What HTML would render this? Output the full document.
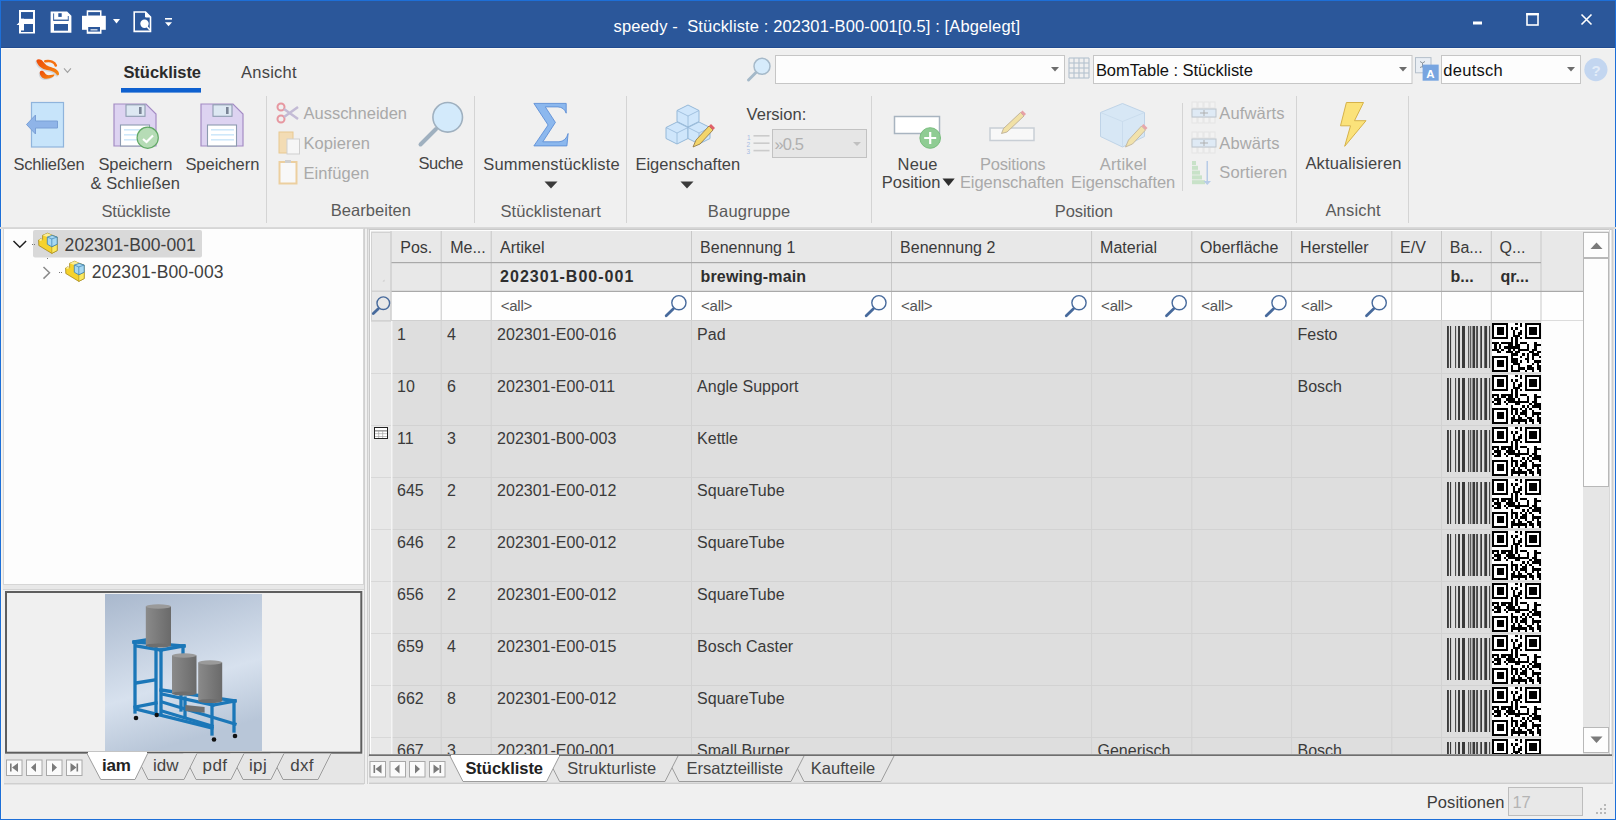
<!DOCTYPE html>
<html><head><meta charset="utf-8"><title>speedy</title>
<style>html,body{margin:0;padding:0;width:1616px;height:820px;overflow:hidden;background:#f0f0f0}
svg{display:block;font-family:"Liberation Sans",sans-serif}</style></head>
<body><svg width="1616" height="820" viewBox="0 0 1616 820">
<rect x="0" y="0" width="1616" height="820" fill="#f0f0f0"/>
<rect x="0" y="0" width="1616" height="48" fill="#2b579a"/>
<rect x="0" y="47" width="1616" height="1" fill="#224c90"/>
<rect x="1" y="48" width="1614" height="1" fill="#fbfaf6"/>
<rect x="1" y="48" width="1" height="772" fill="#f8f4ec"/>
<rect x="0" y="0" width="1616" height="1" fill="#1d6fd8"/>
<rect x="0" y="0" width="1" height="820" fill="#1d6fd8"/>
<rect x="1615" y="0" width="1" height="820" fill="#1d6fd8"/>
<rect x="0" y="819" width="1616" height="1" fill="#1d6fd8"/>
<g fill="#fff">
<path d="M19 10h16v23.5h-16v-8.5h-2.5l2.5-2.5v-1.5z"/>
</g>
<rect x="21" y="12.2" width="12" height="6.4" fill="#2b579a"/>
<rect x="24" y="18.6" width="9" height="0.1" fill="#2b579a"/>
<rect x="24" y="12.2" width="9" height="6.4" fill="#2b579a"/>
<rect x="24" y="24" width="9" height="8" fill="#2b579a"/>
<rect x="21" y="12.2" width="3" height="1.5" fill="#2b579a"/>
<rect x="21" y="30.5" width="3" height="1.5" fill="#2b579a"/>
<path d="M50.6 11.4h16.5l4.3 4.3v17h-20.8z" fill="#fff"/>
<rect x="54" y="24" width="14" height="6.7" fill="#2b579a"/>
<rect x="54" y="19.6" width="14" height="1.3" fill="#2b579a"/>
<rect x="58.3" y="13.2" width="3.4" height="3.7" fill="#2b579a"/>
<rect x="53.2" y="13.4" width="0.9" height="7.5" fill="#2b579a"/>
<rect x="67.8" y="16" width="0.9" height="5" fill="#2b579a"/>
<rect x="86.7" y="10.3" width="14.8" height="23.5" fill="#fff"/>
<rect x="82" y="15.8" width="23.8" height="14" fill="#fff"/>
<rect x="88.2" y="12.1" width="11.8" height="3.4" fill="#2b579a"/>
<rect x="88.2" y="27" width="11.8" height="4.6" fill="#2b579a"/>
<rect x="90.5" y="29.3" width="7" height="1.1" fill="#fff"/>
<path d="M113 18.9h7l-3.5 4.7z" fill="#fff"/>
<path d="M134.2 12h11.3l5 5v14.4h-16.3z" fill="none" stroke="#fff" stroke-width="1.6"/>
<path d="M145.5 12v5h5" fill="#fff" stroke="#fff" stroke-width="1"/>
<circle cx="144.5" cy="23.8" r="4.2" fill="#fff"/>
<path d="M146 25.5l4 4.5" stroke="#fff" stroke-width="1.6"/>
<rect x="165" y="18" width="7" height="1.6" fill="#fff"/>
<path d="M165 22.3h7l-3.5 4z" fill="#fff"/>
<text x="613.60" y="31.50" font-size="16.5" fill="#ffffff" textLength="406.42" lengthAdjust="spacing" xml:space="preserve">speedy -  Stückliste : 202301-B00-001[0.5] : [Abgelegt]</text>
<rect x="1473" y="21.5" width="9" height="3" fill="#fff"/>
<rect x="1527" y="14" width="11" height="11" fill="none" stroke="#fff" stroke-width="1.6"/>
<rect x="1526.2" y="13" width="12.6" height="2.4" fill="#fff"/>
<path d="M1581.5 14.5l10 10M1591.5 14.5l-10 10" stroke="#fff" stroke-width="1.6"/>
<defs><linearGradient id="lg" x1="0" y1="0" x2="1" y2="1"><stop offset="0" stop-color="#ee4a08"/><stop offset="1" stop-color="#f58a12"/></linearGradient></defs>
<g opacity="0.35" transform="translate(-1,1.2)"><path d="M36.5 61.5C36 59 39 58.5 41.5 60C44 62 45 65 49 66.5C54 68 58.5 69.5 59 73.5C59.2 75.5 57.5 76 56.5 74.5C55 71.5 51 70.8 47 70C42 69 38 66 36.5 61.5Z M39.8 72C40.5 70 43.5 70.5 44.5 72.5C45.5 74.5 47.5 75.5 50.5 75C52.5 74.5 54 74 54.5 74.8C54.5 76.5 51 78.5 46.5 78.8C42.5 79 39.5 76 39.8 72Z" fill="#9aa8b8"/></g>
<path d="M36.5 61.5C36 59 39 58.5 41.5 60C44 62 45 65 49 66.5C54 68 58.5 69.5 59 73.5C59.2 75.5 57.5 76 56.5 74.5C55 71.5 51 70.8 47 70C42 69 38 66 36.5 61.5Z" fill="url(#lg)"/>
<path d="M45.3 61.2C50 60.3 54.5 61.8 55.8 65.5" fill="none" stroke="#f57010" stroke-width="2.6" stroke-linecap="round"/>
<path d="M39.8 72C40.5 70 43.5 70.5 44.5 72.5C45.5 74.5 47.5 75.5 50.5 75C52.5 74.5 54 74 54.5 74.8C54.5 76.5 51 78.5 46.5 78.8C42.5 79 39.5 76 39.8 72Z" fill="url(#lg)"/>
<path d="M64 68.4l3.5 3.9l3.4-3.9" fill="none" stroke="#a0a0a0" stroke-width="1.1"/>
<text x="123.40" y="77.90" font-size="16.5" fill="#2b2b2b" font-weight="bold" textLength="77.65" lengthAdjust="spacing" xml:space="preserve">Stückliste</text>
<rect x="121" y="88" width="80" height="4.6" fill="#0e60cf"/>
<text x="241.00" y="77.90" font-size="16.5" fill="#444444" textLength="55.61" lengthAdjust="spacing" xml:space="preserve">Ansicht</text>
<circle cx="762" cy="66.3" r="8" fill="#d6ebfb" stroke="#a5b9c9" stroke-width="1.5"/>
<path d="M756 72.5l-7.5 7.5" stroke="#a5b9c9" stroke-width="3" stroke-linecap="round"/>
<rect x="775.5" y="55.5" width="289" height="28" fill="#fdfdfd" stroke="#c6c6c6" stroke-width="1"/>
<path d="M1051 67h8l-4 4.5z" fill="#6d6d6d"/>
<g stroke="#b8c4d0" stroke-width="1.2" fill="none">
<line x1="1069" y1="58" x2="1069" y2="78"/>
<line x1="1069" y1="58" x2="1089" y2="58"/>
<line x1="1074" y1="58" x2="1074" y2="78"/>
<line x1="1069" y1="63" x2="1089" y2="63"/>
<line x1="1079" y1="58" x2="1079" y2="78"/>
<line x1="1069" y1="68" x2="1089" y2="68"/>
<line x1="1084" y1="58" x2="1084" y2="78"/>
<line x1="1069" y1="73" x2="1089" y2="73"/>
<line x1="1089" y1="58" x2="1089" y2="78"/>
<line x1="1069" y1="78" x2="1089" y2="78"/>
</g>
<rect x="1093.5" y="55.5" width="318.5" height="28" fill="#fdfdfd" stroke="#c6c6c6" stroke-width="1"/>
<text x="1095.90" y="75.70" font-size="16.5" fill="#111" textLength="156.93" lengthAdjust="spacing" xml:space="preserve">BomTable : Stückliste</text>
<path d="M1399 67h8l-4 4.5z" fill="#6d6d6d"/>
<rect x="1415.5" y="57.6" width="15.5" height="15.2" fill="#e9eef4" stroke="#b4bfca" stroke-width="1"/>
<path d="M1420 61.5l2.5 1.5l2.5-1.5M1422.5 63v4.5M1420 67.5l5-2" stroke="#8a949e" stroke-width="1" fill="none"/>
<rect x="1422.6" y="64.6" width="16.1" height="16.1" fill="#78a5e0"/>
<text x="1426.3" y="78.3" font-size="11.5" font-weight="bold" fill="#ffffff">A</text>
<rect x="1441.5" y="55.5" width="139" height="28" fill="#fdfdfd" stroke="#c6c6c6" stroke-width="1"/>
<text x="1443.20" y="75.70" font-size="16.5" fill="#111" textLength="59.59" lengthAdjust="spacing" xml:space="preserve">deutsch</text>
<path d="M1567 67h8l-4 4.5z" fill="#6d6d6d"/>
<circle cx="1595.9" cy="69.6" r="11.6" fill="#c3d6f0"/>
<text x="1591.6" y="75.8" font-size="15" font-weight="bold" fill="#e2ecf8">?</text>
<rect x="266.0" y="96" width="1" height="127" fill="#d4d4d4"/>
<rect x="474.0" y="96" width="1" height="127" fill="#d4d4d4"/>
<rect x="626.0" y="96" width="1" height="127" fill="#d4d4d4"/>
<rect x="871.0" y="96" width="1" height="127" fill="#d4d4d4"/>
<rect x="1296.0" y="96" width="1" height="127" fill="#d4d4d4"/>
<rect x="1408.0" y="96" width="1" height="127" fill="#d4d4d4"/>
<rect x="1182" y="103" width="1" height="88" fill="#d4d4d4"/>
<rect x="0" y="227" width="1616" height="2" fill="#d9d9d9"/>
<rect x="31.5" y="102.5" width="32" height="44.5" fill="#c7e4fa" stroke="#8fb4dc" stroke-width="1.2"/>
<path d="M26.5 124.5l9-9.5v6h22v7h-22v6z" fill="#8fb4e8" stroke="#7aa0d6" stroke-width="1"/>
<text x="13.50" y="170.00" font-size="16.5" fill="#444444" textLength="71.07" lengthAdjust="spacing" xml:space="preserve">Schließen</text>
<path d="M114 104h32l10 10v32h-42z" fill="#ddd3f1" stroke="#a48cc4" stroke-width="1.2"/>
<rect x="126" y="104.8" width="19" height="11.5" fill="#dde8f2" stroke="#8d9bb0" stroke-width="1.1"/>
<rect x="139" y="107" width="2.6" height="7" fill="#7a8496"/>
<rect x="120.5" y="125" width="29" height="21" fill="#ffffff" stroke="#8d9bb0" stroke-width="1.1"/>
<rect x="124" y="129" width="23" height="1.6" fill="#cfe8fa"/>
<rect x="124" y="134" width="23" height="1.6" fill="#cfe8fa"/>
<rect x="124" y="139" width="23" height="1.6" fill="#cfe8fa"/>
<circle cx="147.7" cy="137.7" r="10.6" fill="#b6dcb6" stroke="#62a966" stroke-width="1.2"/>
<path d="M143 139l3.5 3l6.5-6.5" fill="none" stroke="#fff" stroke-width="2.2"/>
<text x="98.40" y="170.00" font-size="16.5" fill="#444444" textLength="74.00" lengthAdjust="spacing" xml:space="preserve">Speichern</text>
<text x="90.50" y="188.80" font-size="16.5" fill="#444444" textLength="89.46" lengthAdjust="spacing" xml:space="preserve">&amp; Schließen</text>
<path d="M201 104h32l10 10v32h-42z" fill="#ddd3f1" stroke="#a48cc4" stroke-width="1.2"/>
<rect x="213" y="104.8" width="19" height="11.5" fill="#dde8f2" stroke="#8d9bb0" stroke-width="1.1"/>
<rect x="226" y="107" width="2.6" height="7" fill="#7a8496"/>
<rect x="207.5" y="125" width="29" height="21" fill="#ffffff" stroke="#8d9bb0" stroke-width="1.1"/>
<rect x="211" y="129" width="23" height="1.6" fill="#cfe8fa"/>
<rect x="211" y="134" width="23" height="1.6" fill="#cfe8fa"/>
<rect x="211" y="139" width="23" height="1.6" fill="#cfe8fa"/>
<text x="185.40" y="170.00" font-size="16.5" fill="#444444" textLength="74.00" lengthAdjust="spacing" xml:space="preserve">Speichern</text>
<text x="101.40" y="216.50" font-size="16.5" fill="#5a5a5a" textLength="69.31" lengthAdjust="spacing" xml:space="preserve">Stückliste</text>
<g opacity="0.55"><circle cx="281" cy="107" r="3.5" fill="none" stroke="#e05060" stroke-width="2"/><circle cx="281" cy="119" r="3.5" fill="none" stroke="#e05060" stroke-width="2"/><path d="M284 109l14 10M284 117l14-10" stroke="#a090c0" stroke-width="2.5"/></g>
<text x="303.50" y="119.00" font-size="16.5" fill="#a9a9a9" textLength="103.56" lengthAdjust="spacing" xml:space="preserve">Ausschneiden</text>
<rect x="279" y="132" width="14" height="21" fill="#f3dcb4" stroke="#e8c890" stroke-width="1"/>
<rect x="287" y="139" width="12.5" height="15" fill="#f6f6f6" stroke="#cfcfcf" stroke-width="1"/>
<text x="303.50" y="148.90" font-size="16.5" fill="#a9a9a9" textLength="66.55" lengthAdjust="spacing" xml:space="preserve">Kopieren</text>
<rect x="279.5" y="162" width="17" height="21.5" fill="#f8f8f8" stroke="#eccf9f" stroke-width="2"/>
<rect x="285" y="160" width="6" height="3" fill="#d0d0d0"/>
<text x="303.50" y="178.75" font-size="16.5" fill="#a9a9a9" textLength="65.74" lengthAdjust="spacing" xml:space="preserve">Einfügen</text>
<circle cx="447.7" cy="117.3" r="14.8" fill="#d3eafb" stroke="#9fb0bf" stroke-width="1.6"/>
<path d="M436 129l-15.5 15.5" stroke="#9fb0bf" stroke-width="4" stroke-linecap="round"/>
<text x="418.40" y="169.40" font-size="16.5" fill="#444444" textLength="44.98" lengthAdjust="spacing" xml:space="preserve">Suche</text>
<text x="330.80" y="216.30" font-size="16.5" fill="#5a5a5a" textLength="80.21" lengthAdjust="spacing" xml:space="preserve">Bearbeiten</text>
<path d="M533.9 103.4L566.2 103.4L566.2 113.2Q564 107.2 558 106.9L545.3 106.9L555.4 122.4L542.8 141.8L559 141.8Q566 141.2 568.1 133.5L566.9 145.9L533.9 145.9L548.1 125Z" fill="#8cb8ee" stroke="#5d8fd6" stroke-width="0.9" stroke-linejoin="round"/>
<text x="483.20" y="170.00" font-size="16.5" fill="#444444" textLength="136.48" lengthAdjust="spacing" xml:space="preserve">Summenstückliste</text>
<path d="M544.5 181.5h13l-6.5 7z" fill="#3a3a3a"/>
<text x="500.40" y="216.90" font-size="16.5" fill="#5a5a5a" textLength="100.34" lengthAdjust="spacing" xml:space="preserve">Stücklistenart</text>
<path d="M688 105l11 5.5v11l-11 5.5l-11 -5.5v-11z" fill="#cfe6fb" stroke="#95b8d8" stroke-width="1"/>
<path d="M677 110.5l11 5.5l11 -5.5M688 116v11" fill="none" stroke="#95b8d8" stroke-width="0.8"/>
<path d="M677 122l11 5.5v11l-11 5.5l-11 -5.5v-11z" fill="#cfe6fb" stroke="#95b8d8" stroke-width="1"/>
<path d="M666 127.5l11 5.5l11 -5.5M677 133v11" fill="none" stroke="#95b8d8" stroke-width="0.8"/>
<path d="M699 122l11 5.5v11l-11 5.5l-11 -5.5v-11z" fill="#cfe6fb" stroke="#95b8d8" stroke-width="1"/>
<path d="M688 127.5l11 5.5l11 -5.5M699 133v11" fill="none" stroke="#95b8d8" stroke-width="0.8"/>
<path d="M693 147l3-7l13-14l4 4l-13 14z" fill="#f3d56a" stroke="#8a7040" stroke-width="0.8"/>
<path d="M709 126l2-2l4 4l-2 2z" fill="#e0606a"/>
<text x="635.40" y="170.00" font-size="16.5" fill="#444444" textLength="104.78" lengthAdjust="spacing" xml:space="preserve">Eigenschaften</text>
<path d="M680.5 181.5h13l-6.5 7z" fill="#3a3a3a"/>
<text x="746.60" y="120.00" font-size="16.5" fill="#444444" textLength="59.62" lengthAdjust="spacing" xml:space="preserve">Version:</text>
<g opacity="0.5"><text x="747" y="139.5" font-size="6.5" fill="#5a8ad8">1</text><text x="746.5" y="147" font-size="6.5" fill="#5a8ad8">2</text><text x="746.5" y="154" font-size="6.5" fill="#5a8ad8">3</text>
<rect x="753.5" y="135.0" width="16" height="1.6" fill="#a8a8a8"/>
<rect x="753.5" y="142.4" width="16" height="1.6" fill="#a8a8a8"/>
<rect x="753.5" y="149.8" width="16" height="1.6" fill="#a8a8a8"/>
</g>
<rect x="772.5" y="129.5" width="94" height="28" fill="#e6e6e6" stroke="#c2c2c2" stroke-width="1"/>
<text x="774.50" y="149.60" font-size="16.5" fill="#b0b0b0" textLength="29.51" lengthAdjust="spacing" xml:space="preserve">»0.5</text>
<path d="M853 142h8l-4 4z" fill="#c0c0c0"/>
<text x="707.80" y="216.90" font-size="16.5" fill="#5a5a5a" textLength="82.44" lengthAdjust="spacing" xml:space="preserve">Baugruppe</text>
<rect x="894.5" y="116.5" width="45" height="17" fill="#ffffff" stroke="#a8b4c0" stroke-width="1.5"/>
<circle cx="930.2" cy="138" r="10.3" fill="#8fcc93" stroke="#78bd7d" stroke-width="1"/>
<path d="M930.2 132v12M924.2 138h12" stroke="#fff" stroke-width="2.2"/>
<text x="897.60" y="169.60" font-size="16.5" fill="#444444" textLength="39.85" lengthAdjust="spacing" xml:space="preserve">Neue</text>
<text x="881.80" y="188.40" font-size="16.5" fill="#444444" textLength="58.60" lengthAdjust="spacing" xml:space="preserve">Position</text>
<path d="M942.5 178.5h12.2l-6.1 7.5z" fill="#2e2e2e"/>
<g opacity="0.55">
<rect x="990" y="128" width="44" height="12.5" fill="#ffffff" stroke="#a8b4c0" stroke-width="1.5"/>
<path d="M1001.5 133.5l2-5l17-16l3.5 3.5l-17 16z" fill="#f3d56a" stroke="#8a7040" stroke-width="0.8"/>
<path d="M1020.5 112.5l2-2l3.5 3.5l-2 2z" fill="#e0606a"/>
</g>
<text x="979.90" y="169.60" font-size="16.5" fill="#a9a9a9" textLength="65.65" lengthAdjust="spacing" xml:space="preserve">Positions</text>
<text x="959.90" y="188.40" font-size="16.5" fill="#a9a9a9" textLength="104.08" lengthAdjust="spacing" xml:space="preserve">Eigenschaften</text>
<g opacity="0.5">
<path d="M1122.5 103.5l22 9v24l-22 10.5l-22-10.5v-24z" fill="#bfe0fa" stroke="#8fb8e0" stroke-width="1"/>
<path d="M1100.5 112.5l22 9l22-9M1122.5 121.5v25.5" fill="none" stroke="#9fc4e8" stroke-width="0.8"/>
<path d="M1125.5 147l3-7l13-14l4 4l-13 14z" fill="#f3d56a" stroke="#8a7040" stroke-width="0.8"/>
<path d="M1141.5 126l2-2l4 4l-2 2z" fill="#e0606a"/>
</g>
<text x="1099.70" y="169.60" font-size="16.5" fill="#a9a9a9" textLength="47.04" lengthAdjust="spacing" xml:space="preserve">Artikel</text>
<text x="1071.10" y="188.40" font-size="16.5" fill="#a9a9a9" textLength="104.18" lengthAdjust="spacing" xml:space="preserve">Eigenschaften</text>
<g opacity="0.5">
<rect x="1192" y="102.0" width="5" height="6" fill="#f4f4f4" stroke="#d8d8d8" stroke-width="0.8"/>
<rect x="1198" y="102.0" width="5" height="6" fill="#f4f4f4" stroke="#d8d8d8" stroke-width="0.8"/>
<rect x="1204" y="102.0" width="5" height="6" fill="#f4f4f4" stroke="#d8d8d8" stroke-width="0.8"/>
<rect x="1210" y="102.0" width="5" height="6" fill="#f4f4f4" stroke="#d8d8d8" stroke-width="0.8"/>
<rect x="1192" y="109.5" width="5" height="6" fill="#f4f4f4" stroke="#d8d8d8" stroke-width="0.8"/>
<rect x="1198" y="109.5" width="5" height="6" fill="#f4f4f4" stroke="#d8d8d8" stroke-width="0.8"/>
<rect x="1204" y="109.5" width="5" height="6" fill="#f4f4f4" stroke="#d8d8d8" stroke-width="0.8"/>
<rect x="1210" y="109.5" width="5" height="6" fill="#f4f4f4" stroke="#d8d8d8" stroke-width="0.8"/>
<rect x="1192" y="117.0" width="5" height="6" fill="#f4f4f4" stroke="#d8d8d8" stroke-width="0.8"/>
<rect x="1198" y="117.0" width="5" height="6" fill="#f4f4f4" stroke="#d8d8d8" stroke-width="0.8"/>
<rect x="1204" y="117.0" width="5" height="6" fill="#f4f4f4" stroke="#d8d8d8" stroke-width="0.8"/>
<rect x="1210" y="117.0" width="5" height="6" fill="#f4f4f4" stroke="#d8d8d8" stroke-width="0.8"/>
<rect x="1192" y="109" width="24" height="8" fill="#cfe6fb" stroke="#8a9aaa" stroke-width="1"/>
<path d="M1200 113h8M1204 110v6" stroke="#707070" stroke-width="1"/>
</g>
<g opacity="0.5">
<rect x="1192" y="132.0" width="5" height="6" fill="#f4f4f4" stroke="#d8d8d8" stroke-width="0.8"/>
<rect x="1198" y="132.0" width="5" height="6" fill="#f4f4f4" stroke="#d8d8d8" stroke-width="0.8"/>
<rect x="1204" y="132.0" width="5" height="6" fill="#f4f4f4" stroke="#d8d8d8" stroke-width="0.8"/>
<rect x="1210" y="132.0" width="5" height="6" fill="#f4f4f4" stroke="#d8d8d8" stroke-width="0.8"/>
<rect x="1192" y="139.5" width="5" height="6" fill="#f4f4f4" stroke="#d8d8d8" stroke-width="0.8"/>
<rect x="1198" y="139.5" width="5" height="6" fill="#f4f4f4" stroke="#d8d8d8" stroke-width="0.8"/>
<rect x="1204" y="139.5" width="5" height="6" fill="#f4f4f4" stroke="#d8d8d8" stroke-width="0.8"/>
<rect x="1210" y="139.5" width="5" height="6" fill="#f4f4f4" stroke="#d8d8d8" stroke-width="0.8"/>
<rect x="1192" y="147.0" width="5" height="6" fill="#f4f4f4" stroke="#d8d8d8" stroke-width="0.8"/>
<rect x="1198" y="147.0" width="5" height="6" fill="#f4f4f4" stroke="#d8d8d8" stroke-width="0.8"/>
<rect x="1204" y="147.0" width="5" height="6" fill="#f4f4f4" stroke="#d8d8d8" stroke-width="0.8"/>
<rect x="1210" y="147.0" width="5" height="6" fill="#f4f4f4" stroke="#d8d8d8" stroke-width="0.8"/>
<rect x="1192" y="139" width="24" height="8" fill="#cfe6fb" stroke="#8a9aaa" stroke-width="1"/>
<path d="M1200 143h8M1204 140v6" stroke="#707070" stroke-width="1"/>
</g>
<text x="1219.30" y="118.70" font-size="16.5" fill="#a9a9a9" textLength="65.19" lengthAdjust="spacing" xml:space="preserve">Aufwärts</text>
<text x="1219.30" y="148.60" font-size="16.5" fill="#a9a9a9" textLength="60.20" lengthAdjust="spacing" xml:space="preserve">Abwärts</text>
<g opacity="0.55">
<rect x="1192" y="161.0" width="4" height="4" fill="#a8d8a8"/>
<rect x="1192" y="165.8" width="6" height="4" fill="#a8d8a8"/>
<rect x="1192" y="170.6" width="8" height="4" fill="#a8d8a8"/>
<rect x="1192" y="175.4" width="10" height="4" fill="#a8d8a8"/>
<rect x="1192" y="180.2" width="13" height="4" fill="#a8d8a8"/>
<rect x="1206.5" y="161" width="1.5" height="22" fill="#8aaee0"/>
<path d="M1203.5 181h7.5l-3.75 4z" fill="#8aaee0"/>
</g>
<text x="1219.30" y="178.40" font-size="16.5" fill="#a9a9a9" textLength="67.85" lengthAdjust="spacing" xml:space="preserve">Sortieren</text>
<text x="1054.80" y="216.60" font-size="16.5" fill="#5a5a5a" textLength="58.20" lengthAdjust="spacing" xml:space="preserve">Position</text>
<path d="M1346.4 102.5L1363.5 102.5L1354.5 120.7L1366 120.7L1344.7 146.3L1350.5 125.8L1340.5 125.8Z" fill="#fbe27a" stroke="#d6b24a" stroke-width="1"/>
<text x="1305.50" y="169.40" font-size="16.5" fill="#444444" textLength="95.86" lengthAdjust="spacing" xml:space="preserve">Aktualisieren</text>
<text x="1325.40" y="216.30" font-size="16.5" fill="#5a5a5a" textLength="55.21" lengthAdjust="spacing" xml:space="preserve">Ansicht</text>
<rect x="3" y="228" width="361" height="357" fill="#d6d6d6"/>
<rect x="4" y="229" width="359" height="355" fill="#fdfdfd"/>
<rect x="33" y="230" width="169" height="27.5" rx="2" fill="#d9d9d9"/>
<path d="M13.5 241l6.3 6.3l6.3-6.3" fill="none" stroke="#1e1e1e" stroke-width="1.5"/>
<path d="M43.5 267l6 5.8l-6 5.8" fill="none" stroke="#8a8a8a" stroke-width="1.5"/>
<rect x="32" y="244" width="1" height="1" fill="#777"/>
<rect x="34" y="244" width="1" height="1" fill="#777"/>
<rect x="47" y="258" width="1" height="1" fill="#777"/>
<rect x="59" y="272" width="1" height="1" fill="#777"/>
<rect x="61" y="272" width="1" height="1" fill="#777"/>
<g transform="translate(36.3,231)">
<path d="M2.3 9L4.5 7.8L6.3 8.8V4.3L11.4 2.2L15.8 4.2L20.9 6.1V19.6L15.5 22.4L2.5 14.5Z" fill="#f6d22c" stroke="#9a7c10" stroke-width="0.7"/>
<path d="M6.3 4.3L11.4 2.2L15.8 4.2L11 6.1Z" fill="#fbee98"/>
<path d="M2.3 9L4.5 7.8L6.3 8.8L4.2 10Z" fill="#fbee98"/>
<path d="M15.5 15.8L20.9 13.2V19.6L15.5 22.4Z" fill="#fbe960" stroke="#9a7c10" stroke-width="0.5"/>
<path d="M11 6.1L15.8 4.4L20.9 6.1V13.2L15.5 15.8L11 13.2Z" fill="#a6d8f2" stroke="#3b80b2" stroke-width="0.8"/>
<path d="M11 6.1L15.5 7.9L20.9 6.1M15.5 7.9V15.8" fill="none" stroke="#3b80b2" stroke-width="0.7"/>
</g>
<g transform="translate(63.3,259)">
<path d="M2.3 9L4.5 7.8L6.3 8.8V4.3L11.4 2.2L15.8 4.2L20.9 6.1V19.6L15.5 22.4L2.5 14.5Z" fill="#f6d22c" stroke="#9a7c10" stroke-width="0.7"/>
<path d="M6.3 4.3L11.4 2.2L15.8 4.2L11 6.1Z" fill="#fbee98"/>
<path d="M2.3 9L4.5 7.8L6.3 8.8L4.2 10Z" fill="#fbee98"/>
<path d="M15.5 15.8L20.9 13.2V19.6L15.5 22.4Z" fill="#fbe960" stroke="#9a7c10" stroke-width="0.5"/>
<path d="M11 6.1L15.8 4.4L20.9 6.1V13.2L15.5 15.8L11 13.2Z" fill="#a6d8f2" stroke="#3b80b2" stroke-width="0.8"/>
<path d="M11 6.1L15.5 7.9L20.9 6.1M15.5 7.9V15.8" fill="none" stroke="#3b80b2" stroke-width="0.7"/>
</g>
<text x="64.60" y="250.50" font-size="17.5" fill="#404040" textLength="131.19" lengthAdjust="spacing" xml:space="preserve">202301-B00-001</text>
<text x="91.80" y="277.70" font-size="17.5" fill="#404040" textLength="131.69" lengthAdjust="spacing" xml:space="preserve">202301-B00-003</text>
<rect x="3" y="585" width="361" height="5" fill="#e8e8e8"/>
<rect x="3" y="589" width="361" height="1" fill="#d4d4d4"/>
<rect x="6" y="592" width="355.3" height="160.7" fill="#f0f0f0" stroke="#5e5e5e" stroke-width="2"/>
<defs><linearGradient id="bg" x1="0" y1="0" x2="0.3" y2="1">
<stop offset="0" stop-color="#a9b8cd"/><stop offset="0.65" stop-color="#d7e1ee"/><stop offset="1" stop-color="#b8c6d8"/></linearGradient>
<linearGradient id="cyl" x1="0" y1="0" x2="1" y2="0"><stop offset="0" stop-color="#8a8a8a"/><stop offset="0.5" stop-color="#7a7a7a"/><stop offset="1" stop-color="#6a6a6a"/></linearGradient></defs>
<g transform="translate(105,594)">
<rect x="0" y="0" width="157" height="157" fill="url(#bg)"/>
<line x1="29" y1="48" x2="79" y2="52" stroke="#1b77b8" stroke-width="3.3" stroke-linecap="square"/>
<line x1="31" y1="52" x2="56" y2="56" stroke="#1b77b8" stroke-width="3.3" stroke-linecap="square"/>
<line x1="56" y1="56" x2="79" y2="52" stroke="#1b77b8" stroke-width="3.3" stroke-linecap="square"/>
<line x1="29" y1="48" x2="41" y2="46" stroke="#1b77b8" stroke-width="3.3" stroke-linecap="square"/>
<line x1="30" y1="49" x2="30" y2="118" stroke="#1b77b8" stroke-width="3.3" stroke-linecap="square"/>
<line x1="51" y1="54" x2="51" y2="118" stroke="#1b77b8" stroke-width="3.3" stroke-linecap="square"/>
<line x1="56" y1="56" x2="56" y2="119" stroke="#1b77b8" stroke-width="3.3" stroke-linecap="square"/>
<line x1="78" y1="52" x2="78" y2="60" stroke="#1b77b8" stroke-width="3.3" stroke-linecap="square"/>
<line x1="31" y1="89" x2="50" y2="86" stroke="#1b77b8" stroke-width="3.3" stroke-linecap="square"/>
<line x1="30" y1="113" x2="51" y2="109" stroke="#1b77b8" stroke-width="3.3" stroke-linecap="square"/>
<line x1="56" y1="96" x2="130" y2="107" stroke="#1b77b8" stroke-width="3.3" stroke-linecap="square"/>
<line x1="57" y1="100" x2="108" y2="111" stroke="#1b77b8" stroke-width="3.3" stroke-linecap="square"/>
<line x1="108" y1="111" x2="130" y2="107" stroke="#1b77b8" stroke-width="3.3" stroke-linecap="square"/>
<line x1="80" y1="104" x2="80" y2="122" stroke="#1b77b8" stroke-width="3.3" stroke-linecap="square"/>
<line x1="107" y1="111" x2="107" y2="140" stroke="#1b77b8" stroke-width="3.3" stroke-linecap="square"/>
<line x1="129" y1="107" x2="129" y2="137" stroke="#1b77b8" stroke-width="3.3" stroke-linecap="square"/>
<line x1="76" y1="102" x2="76" y2="116" stroke="#1b77b8" stroke-width="3.3" stroke-linecap="square"/>
<line x1="31" y1="115" x2="107" y2="134" stroke="#1b77b8" stroke-width="3.3" stroke-linecap="square"/>
<line x1="57" y1="108" x2="130" y2="130" stroke="#1b77b8" stroke-width="3.3" stroke-linecap="square"/>
<line x1="57" y1="117" x2="107" y2="132" stroke="#1b77b8" stroke-width="3.3" stroke-linecap="square"/>
<g fill="#111"><circle cx="31" cy="124" r="2.3"/><circle cx="51.7" cy="121" r="2.2"/><circle cx="109" cy="145.5" r="2.3"/><circle cx="130" cy="142" r="2.3"/></g>
<rect x="40.8" y="12.5" width="25.2" height="39" fill="url(#cyl)"/>
<ellipse cx="53.4" cy="12.5" rx="12.6" ry="2.2" fill="#9a9a9a"/>
<ellipse cx="53.4" cy="51.5" rx="12.6" ry="2" fill="#6e6e6e"/>
<rect x="67" y="61.5" width="24.5" height="38" fill="url(#cyl)"/>
<ellipse cx="79.25" cy="61.5" rx="12.25" ry="2.2" fill="#9a9a9a"/>
<ellipse cx="79.25" cy="99.5" rx="12.25" ry="2" fill="#6e6e6e"/>
<rect x="93.2" y="68.5" width="24" height="38.5" fill="url(#cyl)"/>
<ellipse cx="105.2" cy="68.5" rx="12.0" ry="2.2" fill="#9a9a9a"/>
<ellipse cx="105.2" cy="107.0" rx="12.0" ry="2" fill="#6e6e6e"/>
<path d="M80.4 111L99.6 113L99.6 118.7L80.4 117Z" fill="#707070"/>
</g>
<rect x="4" y="754" width="360" height="30" fill="#e6e6e6"/>
<rect x="4" y="783" width="360" height="1.5" fill="#cfcfcf"/>
<rect x="6.5" y="760.0" width="15.5" height="15.5" fill="#fafafa" stroke="#a8a8a8" stroke-width="1"/>
<rect x="10" y="763.5" width="1.6" height="8" fill="#7a7a7a"/>
<path d="M18 763.0v9l-6-4.5z" fill="#7a7a7a"/>
<rect x="26.5" y="760.0" width="15.5" height="15.5" fill="#fafafa" stroke="#a8a8a8" stroke-width="1"/>
<path d="M36 763.0v9l-5-4.5z" fill="#7a7a7a"/>
<rect x="46.5" y="760.0" width="15.5" height="15.5" fill="#fafafa" stroke="#a8a8a8" stroke-width="1"/>
<path d="M52 763.0v9l5-4.5z" fill="#7a7a7a"/>
<rect x="66.5" y="760.0" width="15.5" height="15.5" fill="#fafafa" stroke="#a8a8a8" stroke-width="1"/>
<rect x="76.5" y="763.5" width="1.6" height="8" fill="#7a7a7a"/>
<path d="M70.5 763.0v9l6-4.5z" fill="#7a7a7a"/>
<path d="M270 753.5L283 779.5L318 779.5L331 753.5" fill="#e6e6e6" stroke="#9c9c9c" stroke-width="1"/>
<text x="290.30" y="771.30" font-size="17" fill="#444" textLength="23.18" lengthAdjust="spacing" xml:space="preserve">dxf</text>
<path d="M230 753.5L243 779.5L271 779.5L284 753.5" fill="#e6e6e6" stroke="#9c9c9c" stroke-width="1"/>
<text x="249.00" y="771.30" font-size="17" fill="#444" textLength="17.71" lengthAdjust="spacing" xml:space="preserve">ipj</text>
<path d="M183 753.5L196 779.5L231 779.5L244 753.5" fill="#e6e6e6" stroke="#9c9c9c" stroke-width="1"/>
<text x="202.60" y="771.30" font-size="17" fill="#444" textLength="24.43" lengthAdjust="spacing" xml:space="preserve">pdf</text>
<path d="M135 753.5L148 779.5L184 779.5L197 753.5" fill="#e6e6e6" stroke="#9c9c9c" stroke-width="1"/>
<text x="152.90" y="771.30" font-size="17" fill="#444" textLength="25.61" lengthAdjust="spacing" xml:space="preserve">idw</text>
<path d="M87 753.5L100.7 779.5L135 779.5L147.7 753.5" fill="#ffffff" stroke="#9c9c9c" stroke-width="1"/>
<rect x="88" y="752" width="59" height="2" fill="#ffffff"/>
<text x="101.90" y="771.30" font-size="17" fill="#222" font-weight="bold" textLength="29.09" lengthAdjust="spacing" xml:space="preserve">iam</text>
<rect x="364" y="228" width="1" height="556" fill="#d0d0d0"/>
<rect x="367" y="228" width="1" height="556" fill="#d0d0d0"/>
<rect x="368" y="229" width="1245" height="555" fill="#f0f0f0"/>
<rect x="368" y="229" width="1245" height="527" fill="#fdfdfd" stroke="#cfcfcf" stroke-width="1"/>
<rect x="371" y="231" width="1212" height="60.5" fill="#e8e8e8"/>
<rect x="391" y="291.5" width="1192" height="29" fill="#fefefe"/>
<rect x="371" y="291.5" width="20" height="29" fill="#e8e8e8"/>
<rect x="371" y="231" width="20" height="523" fill="#e8e8e8"/>
<clipPath id="gclip"><rect x="371" y="320.5" width="1212" height="433.5"/></clipPath>
<g clip-path="url(#gclip)">
<rect x="392" y="320.5" width="1149" height="434" fill="#dedede"/>
<rect x="371" y="321" width="20" height="1" fill="#d8d8d8"/>
<rect x="391" y="373" width="1150" height="1" fill="#d2d2d2"/>
<text x="397.00" y="340.00" font-size="16" fill="#3a3a3a" xml:space="preserve">1</text>
<text x="447.00" y="340.00" font-size="16" fill="#3a3a3a" xml:space="preserve">4</text>
<text x="497.10" y="340.00" font-size="16" fill="#3a3a3a" xml:space="preserve">202301-E00-016</text>
<text x="697.10" y="340.00" font-size="16" fill="#3a3a3a" xml:space="preserve">Pad</text>
<text x="1297.50" y="340.00" font-size="16" fill="#3a3a3a" xml:space="preserve">Festo</text>
<rect x="371" y="373" width="20" height="1" fill="#d8d8d8"/>
<rect x="391" y="425" width="1150" height="1" fill="#d2d2d2"/>
<text x="397.00" y="392.00" font-size="16" fill="#3a3a3a" xml:space="preserve">10</text>
<text x="447.00" y="392.00" font-size="16" fill="#3a3a3a" xml:space="preserve">6</text>
<text x="497.10" y="392.00" font-size="16" fill="#3a3a3a" xml:space="preserve">202301-E00-011</text>
<text x="697.10" y="392.00" font-size="16" fill="#3a3a3a" xml:space="preserve">Angle Support</text>
<text x="1297.50" y="392.00" font-size="16" fill="#3a3a3a" xml:space="preserve">Bosch</text>
<rect x="371" y="425" width="20" height="1" fill="#d8d8d8"/>
<rect x="391" y="477" width="1150" height="1" fill="#d2d2d2"/>
<text x="397.00" y="444.00" font-size="16" fill="#3a3a3a" xml:space="preserve">11</text>
<text x="447.00" y="444.00" font-size="16" fill="#3a3a3a" xml:space="preserve">3</text>
<text x="497.10" y="444.00" font-size="16" fill="#3a3a3a" xml:space="preserve">202301-B00-003</text>
<text x="697.10" y="444.00" font-size="16" fill="#3a3a3a" xml:space="preserve">Kettle</text>
<rect x="371" y="477" width="20" height="1" fill="#d8d8d8"/>
<rect x="391" y="529" width="1150" height="1" fill="#d2d2d2"/>
<text x="397.00" y="496.00" font-size="16" fill="#3a3a3a" xml:space="preserve">645</text>
<text x="447.00" y="496.00" font-size="16" fill="#3a3a3a" xml:space="preserve">2</text>
<text x="497.10" y="496.00" font-size="16" fill="#3a3a3a" xml:space="preserve">202301-E00-012</text>
<text x="697.10" y="496.00" font-size="16" fill="#3a3a3a" xml:space="preserve">SquareTube</text>
<rect x="371" y="529" width="20" height="1" fill="#d8d8d8"/>
<rect x="391" y="581" width="1150" height="1" fill="#d2d2d2"/>
<text x="397.00" y="548.00" font-size="16" fill="#3a3a3a" xml:space="preserve">646</text>
<text x="447.00" y="548.00" font-size="16" fill="#3a3a3a" xml:space="preserve">2</text>
<text x="497.10" y="548.00" font-size="16" fill="#3a3a3a" xml:space="preserve">202301-E00-012</text>
<text x="697.10" y="548.00" font-size="16" fill="#3a3a3a" xml:space="preserve">SquareTube</text>
<rect x="371" y="581" width="20" height="1" fill="#d8d8d8"/>
<rect x="391" y="633" width="1150" height="1" fill="#d2d2d2"/>
<text x="397.00" y="600.00" font-size="16" fill="#3a3a3a" xml:space="preserve">656</text>
<text x="447.00" y="600.00" font-size="16" fill="#3a3a3a" xml:space="preserve">2</text>
<text x="497.10" y="600.00" font-size="16" fill="#3a3a3a" xml:space="preserve">202301-E00-012</text>
<text x="697.10" y="600.00" font-size="16" fill="#3a3a3a" xml:space="preserve">SquareTube</text>
<rect x="371" y="633" width="20" height="1" fill="#d8d8d8"/>
<rect x="391" y="685" width="1150" height="1" fill="#d2d2d2"/>
<text x="397.00" y="652.00" font-size="16" fill="#3a3a3a" xml:space="preserve">659</text>
<text x="447.00" y="652.00" font-size="16" fill="#3a3a3a" xml:space="preserve">4</text>
<text x="497.10" y="652.00" font-size="16" fill="#3a3a3a" xml:space="preserve">202301-E00-015</text>
<text x="697.10" y="652.00" font-size="16" fill="#3a3a3a" xml:space="preserve">Bosch Caster</text>
<rect x="371" y="685" width="20" height="1" fill="#d8d8d8"/>
<rect x="391" y="737" width="1150" height="1" fill="#d2d2d2"/>
<text x="397.00" y="704.00" font-size="16" fill="#3a3a3a" xml:space="preserve">662</text>
<text x="447.00" y="704.00" font-size="16" fill="#3a3a3a" xml:space="preserve">8</text>
<text x="497.10" y="704.00" font-size="16" fill="#3a3a3a" xml:space="preserve">202301-E00-012</text>
<text x="697.10" y="704.00" font-size="16" fill="#3a3a3a" xml:space="preserve">SquareTube</text>
<rect x="371" y="737" width="20" height="1" fill="#d8d8d8"/>
<rect x="391" y="789" width="1150" height="1" fill="#d2d2d2"/>
<text x="397.00" y="756.00" font-size="16" fill="#3a3a3a" xml:space="preserve">667</text>
<text x="447.00" y="756.00" font-size="16" fill="#3a3a3a" xml:space="preserve">3</text>
<text x="497.10" y="756.00" font-size="16" fill="#3a3a3a" xml:space="preserve">202301-E00-001</text>
<text x="697.10" y="756.00" font-size="16" fill="#3a3a3a" xml:space="preserve">Small Burner</text>
<text x="1097.50" y="756.00" font-size="16" fill="#3a3a3a" xml:space="preserve">Generisch</text>
<text x="1297.50" y="756.00" font-size="16" fill="#3a3a3a" xml:space="preserve">Bosch</text>
<rect x="440.7" y="320.5" width="1" height="434" fill="#d2d2d2"/>
<rect x="490.7" y="320.5" width="1" height="434" fill="#d2d2d2"/>
<rect x="691.0" y="320.5" width="1" height="434" fill="#d2d2d2"/>
<rect x="891.0" y="320.5" width="1" height="434" fill="#d2d2d2"/>
<rect x="1091.1" y="320.5" width="1" height="434" fill="#d2d2d2"/>
<rect x="1191.3" y="320.5" width="1" height="434" fill="#d2d2d2"/>
<rect x="1291.1" y="320.5" width="1" height="434" fill="#d2d2d2"/>
<rect x="1391.3" y="320.5" width="1" height="434" fill="#d2d2d2"/>
<rect x="1441.0" y="320.5" width="1" height="434" fill="#d2d2d2"/>
<rect x="1490.8" y="320.5" width="1" height="434" fill="#d2d2d2"/>
<rect x="1540.5" y="320.5" width="1" height="434" fill="#d2d2d2"/>
<rect x="391" y="320.5" width="1.5" height="434" fill="#f4f4f4"/>
</g>
<rect x="390.5" y="231" width="1" height="89.5" fill="#c8c8c8"/>
<rect x="440.7" y="231" width="1" height="89.5" fill="#c8c8c8"/>
<rect x="490.7" y="231" width="1" height="89.5" fill="#c8c8c8"/>
<rect x="691.0" y="231" width="1" height="89.5" fill="#c8c8c8"/>
<rect x="891.0" y="231" width="1" height="89.5" fill="#c8c8c8"/>
<rect x="1091.1" y="231" width="1" height="89.5" fill="#c8c8c8"/>
<rect x="1191.3" y="231" width="1" height="89.5" fill="#c8c8c8"/>
<rect x="1291.1" y="231" width="1" height="89.5" fill="#c8c8c8"/>
<rect x="1391.3" y="231" width="1" height="89.5" fill="#c8c8c8"/>
<rect x="1441.0" y="231" width="1" height="89.5" fill="#c8c8c8"/>
<rect x="1490.8" y="231" width="1" height="89.5" fill="#c8c8c8"/>
<rect x="1540.5" y="231" width="1" height="89.5" fill="#c8c8c8"/>
<rect x="391" y="262" width="1150" height="1.2" fill="#a9a9a9"/>
<rect x="391" y="290.8" width="1192" height="1.2" fill="#a9a9a9"/>
<rect x="371" y="320" width="1212" height="1" fill="#d0d0d0"/>
<text x="400.30" y="253.00" font-size="16" fill="#3a3a3a" xml:space="preserve">Pos.</text>
<text x="450.20" y="253.00" font-size="16" fill="#3a3a3a" xml:space="preserve">Me...</text>
<text x="500.10" y="253.00" font-size="16" fill="#3a3a3a" xml:space="preserve">Artikel</text>
<text x="700.10" y="253.00" font-size="16" fill="#3a3a3a" xml:space="preserve">Benennung 1</text>
<text x="900.10" y="253.00" font-size="16" fill="#3a3a3a" xml:space="preserve">Benennung 2</text>
<text x="1100.10" y="253.00" font-size="16" fill="#3a3a3a" xml:space="preserve">Material</text>
<text x="1200.10" y="253.00" font-size="16" fill="#3a3a3a" xml:space="preserve">Oberfläche</text>
<text x="1300.10" y="253.00" font-size="16" fill="#3a3a3a" xml:space="preserve">Hersteller</text>
<text x="1400.10" y="253.00" font-size="16" fill="#3a3a3a" xml:space="preserve">E/V</text>
<text x="1449.80" y="253.00" font-size="16" fill="#3a3a3a" xml:space="preserve">Ba...</text>
<text x="1499.60" y="253.00" font-size="16" fill="#3a3a3a" xml:space="preserve">Q...</text>
<text x="500.10" y="282.40" font-size="16" fill="#2e2e2e" font-weight="bold" textLength="133.19" lengthAdjust="spacing" xml:space="preserve">202301-B00-001</text>
<text x="700.60" y="282.40" font-size="16" fill="#2e2e2e" font-weight="bold" textLength="105.41" lengthAdjust="spacing" xml:space="preserve">brewing-main</text>
<text x="1450.50" y="282.40" font-size="16" fill="#2e2e2e" font-weight="bold" xml:space="preserve">b...</text>
<text x="1500.50" y="282.40" font-size="16" fill="#2e2e2e" font-weight="bold" xml:space="preserve">qr...</text>
<text x="500.70" y="311.30" font-size="15" fill="#555" textLength="31.63" lengthAdjust="spacing" xml:space="preserve">&lt;all&gt;</text>
<circle cx="678.9" cy="302.7" r="7.1" fill="none" stroke="#476a9c" stroke-width="1.4"/>
<path d="M673.4 308.8L666.2 315.8" stroke="#476a9c" stroke-width="2.8" stroke-linecap="round"/>
<text x="701.00" y="311.30" font-size="15" fill="#555" textLength="31.63" lengthAdjust="spacing" xml:space="preserve">&lt;all&gt;</text>
<circle cx="878.9" cy="302.7" r="7.1" fill="none" stroke="#476a9c" stroke-width="1.4"/>
<path d="M873.4 308.8L866.2 315.8" stroke="#476a9c" stroke-width="2.8" stroke-linecap="round"/>
<text x="901.00" y="311.30" font-size="15" fill="#555" textLength="31.63" lengthAdjust="spacing" xml:space="preserve">&lt;all&gt;</text>
<circle cx="1079.0" cy="302.7" r="7.1" fill="none" stroke="#476a9c" stroke-width="1.4"/>
<path d="M1073.5 308.8L1066.3 315.8" stroke="#476a9c" stroke-width="2.8" stroke-linecap="round"/>
<text x="1101.10" y="311.30" font-size="15" fill="#555" textLength="31.63" lengthAdjust="spacing" xml:space="preserve">&lt;all&gt;</text>
<circle cx="1179.2" cy="302.7" r="7.1" fill="none" stroke="#476a9c" stroke-width="1.4"/>
<path d="M1173.7 308.8L1166.5 315.8" stroke="#476a9c" stroke-width="2.8" stroke-linecap="round"/>
<text x="1201.30" y="311.30" font-size="15" fill="#555" textLength="31.63" lengthAdjust="spacing" xml:space="preserve">&lt;all&gt;</text>
<circle cx="1279.0" cy="302.7" r="7.1" fill="none" stroke="#476a9c" stroke-width="1.4"/>
<path d="M1273.5 308.8L1266.3 315.8" stroke="#476a9c" stroke-width="2.8" stroke-linecap="round"/>
<text x="1301.10" y="311.30" font-size="15" fill="#555" textLength="31.63" lengthAdjust="spacing" xml:space="preserve">&lt;all&gt;</text>
<circle cx="1379.2" cy="302.7" r="7.1" fill="none" stroke="#476a9c" stroke-width="1.4"/>
<path d="M1373.7 308.8L1366.5 315.8" stroke="#476a9c" stroke-width="2.8" stroke-linecap="round"/>
<rect x="371.5" y="232.5" width="19.5" height="58.5" fill="none" stroke="#d2d2d2" stroke-width="1"/>
<rect x="371.5" y="291.5" width="19.5" height="29" fill="none" stroke="#d2d2d2" stroke-width="1"/>
<path d="M382.5 281.5h2v-2z" fill="#c8c8c8"/>
<circle cx="383.3" cy="303.2" r="6.3" fill="none" stroke="#476a9c" stroke-width="1.4"/>
<path d="M378.3 308.8L373.3 313.6" stroke="#476a9c" stroke-width="2.8" stroke-linecap="round"/>
<rect x="369.5" y="229.5" width="1243" height="526" fill="none" stroke="#c9c9c9" stroke-width="1"/>
<rect x="374.5" y="427.5" width="13" height="11" fill="#ffffff" stroke="#222" stroke-width="1"/>
<rect x="374.5" y="430.5" width="13" height="0.8" fill="#444"/>
<rect x="375" y="433.5" width="12" height="0.6" fill="#999"/>
<rect x="375" y="436.0" width="12" height="0.6" fill="#999"/>
<rect x="378.5" y="431" width="0.6" height="7" fill="#999"/>
<rect x="382.5" y="431" width="0.6" height="7" fill="#999"/>
<defs><g id="qr"><rect x="0" y="0" width="49.2" height="49.2" fill="#fff"/><path d="M0.00 0.00h2.34v2.34h-2.34zM2.34 0.00h2.34v2.34h-2.34zM4.69 0.00h2.34v2.34h-2.34zM7.03 0.00h2.34v2.34h-2.34zM9.37 0.00h2.34v2.34h-2.34zM11.71 0.00h2.34v2.34h-2.34zM14.06 0.00h2.34v2.34h-2.34zM23.43 0.00h2.34v2.34h-2.34zM28.11 0.00h2.34v2.34h-2.34zM32.80 0.00h2.34v2.34h-2.34zM35.14 0.00h2.34v2.34h-2.34zM37.49 0.00h2.34v2.34h-2.34zM39.83 0.00h2.34v2.34h-2.34zM42.17 0.00h2.34v2.34h-2.34zM44.51 0.00h2.34v2.34h-2.34zM46.86 0.00h2.34v2.34h-2.34zM0.00 2.34h2.34v2.34h-2.34zM14.06 2.34h2.34v2.34h-2.34zM28.11 2.34h2.34v2.34h-2.34zM32.80 2.34h2.34v2.34h-2.34zM46.86 2.34h2.34v2.34h-2.34zM0.00 4.69h2.34v2.34h-2.34zM4.69 4.69h2.34v2.34h-2.34zM7.03 4.69h2.34v2.34h-2.34zM9.37 4.69h2.34v2.34h-2.34zM14.06 4.69h2.34v2.34h-2.34zM18.74 4.69h2.34v2.34h-2.34zM23.43 4.69h2.34v2.34h-2.34zM32.80 4.69h2.34v2.34h-2.34zM37.49 4.69h2.34v2.34h-2.34zM39.83 4.69h2.34v2.34h-2.34zM42.17 4.69h2.34v2.34h-2.34zM46.86 4.69h2.34v2.34h-2.34zM0.00 7.03h2.34v2.34h-2.34zM4.69 7.03h2.34v2.34h-2.34zM7.03 7.03h2.34v2.34h-2.34zM9.37 7.03h2.34v2.34h-2.34zM14.06 7.03h2.34v2.34h-2.34zM21.09 7.03h2.34v2.34h-2.34zM28.11 7.03h2.34v2.34h-2.34zM32.80 7.03h2.34v2.34h-2.34zM37.49 7.03h2.34v2.34h-2.34zM39.83 7.03h2.34v2.34h-2.34zM42.17 7.03h2.34v2.34h-2.34zM46.86 7.03h2.34v2.34h-2.34zM0.00 9.37h2.34v2.34h-2.34zM4.69 9.37h2.34v2.34h-2.34zM7.03 9.37h2.34v2.34h-2.34zM9.37 9.37h2.34v2.34h-2.34zM14.06 9.37h2.34v2.34h-2.34zM21.09 9.37h2.34v2.34h-2.34zM25.77 9.37h2.34v2.34h-2.34zM28.11 9.37h2.34v2.34h-2.34zM32.80 9.37h2.34v2.34h-2.34zM37.49 9.37h2.34v2.34h-2.34zM39.83 9.37h2.34v2.34h-2.34zM42.17 9.37h2.34v2.34h-2.34zM46.86 9.37h2.34v2.34h-2.34zM0.00 11.71h2.34v2.34h-2.34zM14.06 11.71h2.34v2.34h-2.34zM21.09 11.71h2.34v2.34h-2.34zM23.43 11.71h2.34v2.34h-2.34zM25.77 11.71h2.34v2.34h-2.34zM32.80 11.71h2.34v2.34h-2.34zM46.86 11.71h2.34v2.34h-2.34zM0.00 14.06h2.34v2.34h-2.34zM2.34 14.06h2.34v2.34h-2.34zM4.69 14.06h2.34v2.34h-2.34zM7.03 14.06h2.34v2.34h-2.34zM9.37 14.06h2.34v2.34h-2.34zM11.71 14.06h2.34v2.34h-2.34zM14.06 14.06h2.34v2.34h-2.34zM18.74 14.06h2.34v2.34h-2.34zM23.43 14.06h2.34v2.34h-2.34zM28.11 14.06h2.34v2.34h-2.34zM32.80 14.06h2.34v2.34h-2.34zM35.14 14.06h2.34v2.34h-2.34zM37.49 14.06h2.34v2.34h-2.34zM39.83 14.06h2.34v2.34h-2.34zM42.17 14.06h2.34v2.34h-2.34zM44.51 14.06h2.34v2.34h-2.34zM46.86 14.06h2.34v2.34h-2.34zM18.74 16.40h2.34v2.34h-2.34zM23.43 16.40h2.34v2.34h-2.34zM0.00 18.74h2.34v2.34h-2.34zM2.34 18.74h2.34v2.34h-2.34zM4.69 18.74h2.34v2.34h-2.34zM9.37 18.74h2.34v2.34h-2.34zM11.71 18.74h2.34v2.34h-2.34zM14.06 18.74h2.34v2.34h-2.34zM16.40 18.74h2.34v2.34h-2.34zM18.74 18.74h2.34v2.34h-2.34zM23.43 18.74h2.34v2.34h-2.34zM28.11 18.74h2.34v2.34h-2.34zM30.46 18.74h2.34v2.34h-2.34zM32.80 18.74h2.34v2.34h-2.34zM42.17 18.74h2.34v2.34h-2.34zM2.34 21.09h2.34v2.34h-2.34zM7.03 21.09h2.34v2.34h-2.34zM16.40 21.09h2.34v2.34h-2.34zM18.74 21.09h2.34v2.34h-2.34zM23.43 21.09h2.34v2.34h-2.34zM25.77 21.09h2.34v2.34h-2.34zM35.14 21.09h2.34v2.34h-2.34zM42.17 21.09h2.34v2.34h-2.34zM44.51 21.09h2.34v2.34h-2.34zM46.86 21.09h2.34v2.34h-2.34zM2.34 23.43h2.34v2.34h-2.34zM7.03 23.43h2.34v2.34h-2.34zM11.71 23.43h2.34v2.34h-2.34zM14.06 23.43h2.34v2.34h-2.34zM16.40 23.43h2.34v2.34h-2.34zM18.74 23.43h2.34v2.34h-2.34zM21.09 23.43h2.34v2.34h-2.34zM23.43 23.43h2.34v2.34h-2.34zM25.77 23.43h2.34v2.34h-2.34zM35.14 23.43h2.34v2.34h-2.34zM42.17 23.43h2.34v2.34h-2.34zM0.00 25.77h2.34v2.34h-2.34zM2.34 25.77h2.34v2.34h-2.34zM4.69 25.77h2.34v2.34h-2.34zM9.37 25.77h2.34v2.34h-2.34zM16.40 25.77h2.34v2.34h-2.34zM21.09 25.77h2.34v2.34h-2.34zM25.77 25.77h2.34v2.34h-2.34zM28.11 25.77h2.34v2.34h-2.34zM30.46 25.77h2.34v2.34h-2.34zM32.80 25.77h2.34v2.34h-2.34zM35.14 25.77h2.34v2.34h-2.34zM39.83 25.77h2.34v2.34h-2.34zM42.17 25.77h2.34v2.34h-2.34zM4.69 28.11h2.34v2.34h-2.34zM7.03 28.11h2.34v2.34h-2.34zM14.06 28.11h2.34v2.34h-2.34zM16.40 28.11h2.34v2.34h-2.34zM18.74 28.11h2.34v2.34h-2.34zM23.43 28.11h2.34v2.34h-2.34zM25.77 28.11h2.34v2.34h-2.34zM37.49 28.11h2.34v2.34h-2.34zM39.83 28.11h2.34v2.34h-2.34zM44.51 28.11h2.34v2.34h-2.34zM46.86 28.11h2.34v2.34h-2.34zM18.74 30.46h2.34v2.34h-2.34zM21.09 30.46h2.34v2.34h-2.34zM23.43 30.46h2.34v2.34h-2.34zM30.46 30.46h2.34v2.34h-2.34zM35.14 30.46h2.34v2.34h-2.34zM39.83 30.46h2.34v2.34h-2.34zM42.17 30.46h2.34v2.34h-2.34zM44.51 30.46h2.34v2.34h-2.34zM0.00 32.80h2.34v2.34h-2.34zM2.34 32.80h2.34v2.34h-2.34zM4.69 32.80h2.34v2.34h-2.34zM7.03 32.80h2.34v2.34h-2.34zM9.37 32.80h2.34v2.34h-2.34zM11.71 32.80h2.34v2.34h-2.34zM14.06 32.80h2.34v2.34h-2.34zM18.74 32.80h2.34v2.34h-2.34zM28.11 32.80h2.34v2.34h-2.34zM35.14 32.80h2.34v2.34h-2.34zM39.83 32.80h2.34v2.34h-2.34zM46.86 32.80h2.34v2.34h-2.34zM0.00 35.14h2.34v2.34h-2.34zM14.06 35.14h2.34v2.34h-2.34zM18.74 35.14h2.34v2.34h-2.34zM21.09 35.14h2.34v2.34h-2.34zM23.43 35.14h2.34v2.34h-2.34zM32.80 35.14h2.34v2.34h-2.34zM35.14 35.14h2.34v2.34h-2.34zM39.83 35.14h2.34v2.34h-2.34zM0.00 37.49h2.34v2.34h-2.34zM4.69 37.49h2.34v2.34h-2.34zM7.03 37.49h2.34v2.34h-2.34zM9.37 37.49h2.34v2.34h-2.34zM14.06 37.49h2.34v2.34h-2.34zM18.74 37.49h2.34v2.34h-2.34zM21.09 37.49h2.34v2.34h-2.34zM23.43 37.49h2.34v2.34h-2.34zM28.11 37.49h2.34v2.34h-2.34zM35.14 37.49h2.34v2.34h-2.34zM42.17 37.49h2.34v2.34h-2.34zM44.51 37.49h2.34v2.34h-2.34zM46.86 37.49h2.34v2.34h-2.34zM0.00 39.83h2.34v2.34h-2.34zM4.69 39.83h2.34v2.34h-2.34zM7.03 39.83h2.34v2.34h-2.34zM9.37 39.83h2.34v2.34h-2.34zM14.06 39.83h2.34v2.34h-2.34zM21.09 39.83h2.34v2.34h-2.34zM23.43 39.83h2.34v2.34h-2.34zM25.77 39.83h2.34v2.34h-2.34zM39.83 39.83h2.34v2.34h-2.34zM44.51 39.83h2.34v2.34h-2.34zM0.00 42.17h2.34v2.34h-2.34zM4.69 42.17h2.34v2.34h-2.34zM7.03 42.17h2.34v2.34h-2.34zM9.37 42.17h2.34v2.34h-2.34zM14.06 42.17h2.34v2.34h-2.34zM18.74 42.17h2.34v2.34h-2.34zM25.77 42.17h2.34v2.34h-2.34zM35.14 42.17h2.34v2.34h-2.34zM37.49 42.17h2.34v2.34h-2.34zM44.51 42.17h2.34v2.34h-2.34zM46.86 42.17h2.34v2.34h-2.34zM0.00 44.51h2.34v2.34h-2.34zM14.06 44.51h2.34v2.34h-2.34zM18.74 44.51h2.34v2.34h-2.34zM25.77 44.51h2.34v2.34h-2.34zM28.11 44.51h2.34v2.34h-2.34zM30.46 44.51h2.34v2.34h-2.34zM35.14 44.51h2.34v2.34h-2.34zM37.49 44.51h2.34v2.34h-2.34zM39.83 44.51h2.34v2.34h-2.34zM44.51 44.51h2.34v2.34h-2.34zM46.86 44.51h2.34v2.34h-2.34zM0.00 46.86h2.34v2.34h-2.34zM2.34 46.86h2.34v2.34h-2.34zM4.69 46.86h2.34v2.34h-2.34zM7.03 46.86h2.34v2.34h-2.34zM9.37 46.86h2.34v2.34h-2.34zM11.71 46.86h2.34v2.34h-2.34zM14.06 46.86h2.34v2.34h-2.34zM18.74 46.86h2.34v2.34h-2.34zM21.09 46.86h2.34v2.34h-2.34zM23.43 46.86h2.34v2.34h-2.34zM25.77 46.86h2.34v2.34h-2.34zM32.80 46.86h2.34v2.34h-2.34zM39.83 46.86h2.34v2.34h-2.34zM46.86 46.86h2.34v2.34h-2.34z" fill="#000" shape-rendering="crispEdges"/></g><g id="qr2"><rect x="0" y="0" width="49.2" height="49.2" fill="#fff"/><path d="M0.00 0.00h2.34v2.34h-2.34zM2.34 0.00h2.34v2.34h-2.34zM4.69 0.00h2.34v2.34h-2.34zM7.03 0.00h2.34v2.34h-2.34zM9.37 0.00h2.34v2.34h-2.34zM11.71 0.00h2.34v2.34h-2.34zM14.06 0.00h2.34v2.34h-2.34zM23.43 0.00h2.34v2.34h-2.34zM28.11 0.00h2.34v2.34h-2.34zM32.80 0.00h2.34v2.34h-2.34zM35.14 0.00h2.34v2.34h-2.34zM37.49 0.00h2.34v2.34h-2.34zM39.83 0.00h2.34v2.34h-2.34zM42.17 0.00h2.34v2.34h-2.34zM44.51 0.00h2.34v2.34h-2.34zM46.86 0.00h2.34v2.34h-2.34zM0.00 2.34h2.34v2.34h-2.34zM14.06 2.34h2.34v2.34h-2.34zM28.11 2.34h2.34v2.34h-2.34zM32.80 2.34h2.34v2.34h-2.34zM46.86 2.34h2.34v2.34h-2.34zM0.00 4.69h2.34v2.34h-2.34zM4.69 4.69h2.34v2.34h-2.34zM7.03 4.69h2.34v2.34h-2.34zM9.37 4.69h2.34v2.34h-2.34zM14.06 4.69h2.34v2.34h-2.34zM18.74 4.69h2.34v2.34h-2.34zM23.43 4.69h2.34v2.34h-2.34zM32.80 4.69h2.34v2.34h-2.34zM37.49 4.69h2.34v2.34h-2.34zM39.83 4.69h2.34v2.34h-2.34zM42.17 4.69h2.34v2.34h-2.34zM46.86 4.69h2.34v2.34h-2.34zM0.00 7.03h2.34v2.34h-2.34zM4.69 7.03h2.34v2.34h-2.34zM7.03 7.03h2.34v2.34h-2.34zM9.37 7.03h2.34v2.34h-2.34zM14.06 7.03h2.34v2.34h-2.34zM21.09 7.03h2.34v2.34h-2.34zM28.11 7.03h2.34v2.34h-2.34zM32.80 7.03h2.34v2.34h-2.34zM37.49 7.03h2.34v2.34h-2.34zM39.83 7.03h2.34v2.34h-2.34zM42.17 7.03h2.34v2.34h-2.34zM46.86 7.03h2.34v2.34h-2.34zM0.00 9.37h2.34v2.34h-2.34zM4.69 9.37h2.34v2.34h-2.34zM7.03 9.37h2.34v2.34h-2.34zM9.37 9.37h2.34v2.34h-2.34zM14.06 9.37h2.34v2.34h-2.34zM21.09 9.37h2.34v2.34h-2.34zM25.77 9.37h2.34v2.34h-2.34zM28.11 9.37h2.34v2.34h-2.34zM32.80 9.37h2.34v2.34h-2.34zM37.49 9.37h2.34v2.34h-2.34zM39.83 9.37h2.34v2.34h-2.34zM42.17 9.37h2.34v2.34h-2.34zM46.86 9.37h2.34v2.34h-2.34zM0.00 11.71h2.34v2.34h-2.34zM14.06 11.71h2.34v2.34h-2.34zM21.09 11.71h2.34v2.34h-2.34zM23.43 11.71h2.34v2.34h-2.34zM25.77 11.71h2.34v2.34h-2.34zM32.80 11.71h2.34v2.34h-2.34zM46.86 11.71h2.34v2.34h-2.34zM0.00 14.06h2.34v2.34h-2.34zM2.34 14.06h2.34v2.34h-2.34zM4.69 14.06h2.34v2.34h-2.34zM7.03 14.06h2.34v2.34h-2.34zM9.37 14.06h2.34v2.34h-2.34zM11.71 14.06h2.34v2.34h-2.34zM14.06 14.06h2.34v2.34h-2.34zM18.74 14.06h2.34v2.34h-2.34zM23.43 14.06h2.34v2.34h-2.34zM28.11 14.06h2.34v2.34h-2.34zM32.80 14.06h2.34v2.34h-2.34zM35.14 14.06h2.34v2.34h-2.34zM37.49 14.06h2.34v2.34h-2.34zM39.83 14.06h2.34v2.34h-2.34zM42.17 14.06h2.34v2.34h-2.34zM44.51 14.06h2.34v2.34h-2.34zM46.86 14.06h2.34v2.34h-2.34zM18.74 16.40h2.34v2.34h-2.34zM23.43 16.40h2.34v2.34h-2.34zM0.00 18.74h2.34v2.34h-2.34zM2.34 18.74h2.34v2.34h-2.34zM4.69 18.74h2.34v2.34h-2.34zM9.37 18.74h2.34v2.34h-2.34zM11.71 18.74h2.34v2.34h-2.34zM14.06 18.74h2.34v2.34h-2.34zM16.40 18.74h2.34v2.34h-2.34zM18.74 18.74h2.34v2.34h-2.34zM23.43 18.74h2.34v2.34h-2.34zM28.11 18.74h2.34v2.34h-2.34zM30.46 18.74h2.34v2.34h-2.34zM32.80 18.74h2.34v2.34h-2.34zM42.17 18.74h2.34v2.34h-2.34zM0.00 21.09h2.34v2.34h-2.34zM4.69 21.09h2.34v2.34h-2.34zM9.37 21.09h2.34v2.34h-2.34zM11.71 21.09h2.34v2.34h-2.34zM16.40 21.09h2.34v2.34h-2.34zM18.74 21.09h2.34v2.34h-2.34zM23.43 21.09h2.34v2.34h-2.34zM35.14 21.09h2.34v2.34h-2.34zM42.17 21.09h2.34v2.34h-2.34zM44.51 21.09h2.34v2.34h-2.34zM46.86 21.09h2.34v2.34h-2.34zM2.34 23.43h2.34v2.34h-2.34zM4.69 23.43h2.34v2.34h-2.34zM7.03 23.43h2.34v2.34h-2.34zM14.06 23.43h2.34v2.34h-2.34zM16.40 23.43h2.34v2.34h-2.34zM18.74 23.43h2.34v2.34h-2.34zM21.09 23.43h2.34v2.34h-2.34zM25.77 23.43h2.34v2.34h-2.34zM35.14 23.43h2.34v2.34h-2.34zM42.17 23.43h2.34v2.34h-2.34zM0.00 25.77h2.34v2.34h-2.34zM4.69 25.77h2.34v2.34h-2.34zM7.03 25.77h2.34v2.34h-2.34zM11.71 25.77h2.34v2.34h-2.34zM16.40 25.77h2.34v2.34h-2.34zM18.74 25.77h2.34v2.34h-2.34zM21.09 25.77h2.34v2.34h-2.34zM23.43 25.77h2.34v2.34h-2.34zM25.77 25.77h2.34v2.34h-2.34zM28.11 25.77h2.34v2.34h-2.34zM30.46 25.77h2.34v2.34h-2.34zM32.80 25.77h2.34v2.34h-2.34zM35.14 25.77h2.34v2.34h-2.34zM39.83 25.77h2.34v2.34h-2.34zM42.17 25.77h2.34v2.34h-2.34zM2.34 28.11h2.34v2.34h-2.34zM4.69 28.11h2.34v2.34h-2.34zM7.03 28.11h2.34v2.34h-2.34zM14.06 28.11h2.34v2.34h-2.34zM23.43 28.11h2.34v2.34h-2.34zM25.77 28.11h2.34v2.34h-2.34zM37.49 28.11h2.34v2.34h-2.34zM42.17 28.11h2.34v2.34h-2.34zM44.51 28.11h2.34v2.34h-2.34zM46.86 28.11h2.34v2.34h-2.34zM18.74 30.46h2.34v2.34h-2.34zM30.46 30.46h2.34v2.34h-2.34zM35.14 30.46h2.34v2.34h-2.34zM39.83 30.46h2.34v2.34h-2.34zM42.17 30.46h2.34v2.34h-2.34zM44.51 30.46h2.34v2.34h-2.34zM46.86 30.46h2.34v2.34h-2.34zM0.00 32.80h2.34v2.34h-2.34zM2.34 32.80h2.34v2.34h-2.34zM4.69 32.80h2.34v2.34h-2.34zM7.03 32.80h2.34v2.34h-2.34zM9.37 32.80h2.34v2.34h-2.34zM11.71 32.80h2.34v2.34h-2.34zM14.06 32.80h2.34v2.34h-2.34zM18.74 32.80h2.34v2.34h-2.34zM21.09 32.80h2.34v2.34h-2.34zM23.43 32.80h2.34v2.34h-2.34zM28.11 32.80h2.34v2.34h-2.34zM32.80 32.80h2.34v2.34h-2.34zM37.49 32.80h2.34v2.34h-2.34zM46.86 32.80h2.34v2.34h-2.34zM0.00 35.14h2.34v2.34h-2.34zM14.06 35.14h2.34v2.34h-2.34zM18.74 35.14h2.34v2.34h-2.34zM23.43 35.14h2.34v2.34h-2.34zM30.46 35.14h2.34v2.34h-2.34zM32.80 35.14h2.34v2.34h-2.34zM39.83 35.14h2.34v2.34h-2.34zM0.00 37.49h2.34v2.34h-2.34zM4.69 37.49h2.34v2.34h-2.34zM7.03 37.49h2.34v2.34h-2.34zM9.37 37.49h2.34v2.34h-2.34zM14.06 37.49h2.34v2.34h-2.34zM18.74 37.49h2.34v2.34h-2.34zM23.43 37.49h2.34v2.34h-2.34zM28.11 37.49h2.34v2.34h-2.34zM30.46 37.49h2.34v2.34h-2.34zM32.80 37.49h2.34v2.34h-2.34zM39.83 37.49h2.34v2.34h-2.34zM42.17 37.49h2.34v2.34h-2.34zM44.51 37.49h2.34v2.34h-2.34zM46.86 37.49h2.34v2.34h-2.34zM0.00 39.83h2.34v2.34h-2.34zM4.69 39.83h2.34v2.34h-2.34zM7.03 39.83h2.34v2.34h-2.34zM9.37 39.83h2.34v2.34h-2.34zM14.06 39.83h2.34v2.34h-2.34zM21.09 39.83h2.34v2.34h-2.34zM25.77 39.83h2.34v2.34h-2.34zM32.80 39.83h2.34v2.34h-2.34zM39.83 39.83h2.34v2.34h-2.34zM44.51 39.83h2.34v2.34h-2.34zM0.00 42.17h2.34v2.34h-2.34zM4.69 42.17h2.34v2.34h-2.34zM7.03 42.17h2.34v2.34h-2.34zM9.37 42.17h2.34v2.34h-2.34zM14.06 42.17h2.34v2.34h-2.34zM18.74 42.17h2.34v2.34h-2.34zM21.09 42.17h2.34v2.34h-2.34zM25.77 42.17h2.34v2.34h-2.34zM28.11 42.17h2.34v2.34h-2.34zM35.14 42.17h2.34v2.34h-2.34zM37.49 42.17h2.34v2.34h-2.34zM44.51 42.17h2.34v2.34h-2.34zM46.86 42.17h2.34v2.34h-2.34zM0.00 44.51h2.34v2.34h-2.34zM14.06 44.51h2.34v2.34h-2.34zM18.74 44.51h2.34v2.34h-2.34zM21.09 44.51h2.34v2.34h-2.34zM23.43 44.51h2.34v2.34h-2.34zM25.77 44.51h2.34v2.34h-2.34zM28.11 44.51h2.34v2.34h-2.34zM30.46 44.51h2.34v2.34h-2.34zM32.80 44.51h2.34v2.34h-2.34zM37.49 44.51h2.34v2.34h-2.34zM39.83 44.51h2.34v2.34h-2.34zM44.51 44.51h2.34v2.34h-2.34zM46.86 44.51h2.34v2.34h-2.34zM0.00 46.86h2.34v2.34h-2.34zM2.34 46.86h2.34v2.34h-2.34zM4.69 46.86h2.34v2.34h-2.34zM7.03 46.86h2.34v2.34h-2.34zM9.37 46.86h2.34v2.34h-2.34zM11.71 46.86h2.34v2.34h-2.34zM14.06 46.86h2.34v2.34h-2.34zM18.74 46.86h2.34v2.34h-2.34zM25.77 46.86h2.34v2.34h-2.34zM32.80 46.86h2.34v2.34h-2.34zM39.83 46.86h2.34v2.34h-2.34zM46.86 46.86h2.34v2.34h-2.34z" fill="#000" shape-rendering="crispEdges"/></g>
<g id="bc"><rect x="0" y="0" width="1.9" height="42" fill="#3a3a3a"/><rect x="3" y="0" width="1.1" height="42" fill="#3a3a3a"/><rect x="8.1" y="0" width="1" height="42" fill="#3a3a3a"/><rect x="11" y="0" width="2" height="42" fill="#3a3a3a"/><rect x="15" y="0" width="3" height="42" fill="#3a3a3a"/><rect x="21.2" y="0" width="1" height="42" fill="#3a3a3a"/><rect x="23.2" y="0" width="1" height="42" fill="#3a3a3a"/><rect x="25.5" y="0" width="2.6" height="42" fill="#3a3a3a"/><rect x="29.2" y="0" width="1.7" height="42" fill="#3a3a3a"/><rect x="33.3" y="0" width="1.7" height="42" fill="#3a3a3a"/><rect x="37.3" y="0" width="2.8" height="42" fill="#3a3a3a"/><rect x="42.1" y="0" width="1" height="42" fill="#3a3a3a"/></g></defs>
<g clip-path="url(#gclip)">
<rect x="1541.5" y="320.5" width="41.5" height="52.5" fill="#fdfdfd"/>
<use href="#bc" x="1447" y="326"/>
<use href="#qr" x="1492" y="322.8"/>
<rect x="1541.5" y="372.5" width="41.5" height="52.5" fill="#fdfdfd"/>
<use href="#bc" x="1447" y="378"/>
<use href="#qr2" x="1492" y="374.8"/>
<rect x="1541.5" y="424.5" width="41.5" height="52.5" fill="#fdfdfd"/>
<use href="#bc" x="1447" y="430"/>
<use href="#qr2" x="1492" y="426.8"/>
<rect x="1541.5" y="476.5" width="41.5" height="52.5" fill="#fdfdfd"/>
<use href="#bc" x="1447" y="482"/>
<use href="#qr2" x="1492" y="478.8"/>
<rect x="1541.5" y="528.5" width="41.5" height="52.5" fill="#fdfdfd"/>
<use href="#bc" x="1447" y="534"/>
<use href="#qr2" x="1492" y="530.8"/>
<rect x="1541.5" y="580.5" width="41.5" height="52.5" fill="#fdfdfd"/>
<use href="#bc" x="1447" y="586"/>
<use href="#qr2" x="1492" y="582.8"/>
<rect x="1541.5" y="632.5" width="41.5" height="52.5" fill="#fdfdfd"/>
<use href="#bc" x="1447" y="638"/>
<use href="#qr2" x="1492" y="634.8"/>
<rect x="1541.5" y="684.5" width="41.5" height="52.5" fill="#fdfdfd"/>
<use href="#bc" x="1447" y="690"/>
<use href="#qr2" x="1492" y="686.8"/>
<rect x="1541.5" y="736.5" width="41.5" height="52.5" fill="#fdfdfd"/>
<use href="#bc" x="1447" y="742"/>
<use href="#qr2" x="1492" y="738.8"/>
</g>
<rect x="1583" y="231" width="26" height="523" fill="#e6e6e6"/>
<rect x="1583.5" y="232.5" width="25" height="25" fill="#fdfdfd" stroke="#b8b8b8" stroke-width="1"/>
<path d="M1590.5 249h12l-6-6.5z" fill="#7a7a7a"/>
<rect x="1583.5" y="258.5" width="25" height="228" fill="#fdfdfd" stroke="#b8b8b8" stroke-width="1"/>
<rect x="1583.5" y="727.5" width="25" height="25" fill="#fdfdfd" stroke="#b8b8b8" stroke-width="1"/>
<path d="M1590.5 736.5h12l-6 6.5z" fill="#7a7a7a"/>
<rect x="1609" y="229" width="1" height="527" fill="#d8d8d8"/>
<rect x="1611.5" y="229" width="1.2" height="555" fill="#d0d0d0"/>
<rect x="369" y="754.3" width="1243" height="1.6" fill="#646464"/>
<rect x="369" y="756" width="1243" height="26.5" fill="#e6e6e6"/>
<rect x="369" y="782.5" width="1244" height="1.5" fill="#cdcdcd"/>
<rect x="370.0" y="761.5" width="15.5" height="15.5" fill="#fafafa" stroke="#a8a8a8" stroke-width="1"/>
<rect x="373.5" y="765" width="1.6" height="8" fill="#7a7a7a"/>
<path d="M381.5 764.5v9l-6-4.5z" fill="#7a7a7a"/>
<rect x="390.0" y="761.5" width="15.5" height="15.5" fill="#fafafa" stroke="#a8a8a8" stroke-width="1"/>
<path d="M399.5 764.5v9l-5-4.5z" fill="#7a7a7a"/>
<rect x="409.5" y="761.5" width="15.5" height="15.5" fill="#fafafa" stroke="#a8a8a8" stroke-width="1"/>
<path d="M415 764.5v9l5-4.5z" fill="#7a7a7a"/>
<rect x="429.5" y="761.5" width="15.5" height="15.5" fill="#fafafa" stroke="#a8a8a8" stroke-width="1"/>
<rect x="439.5" y="765" width="1.6" height="8" fill="#7a7a7a"/>
<path d="M433.5 764.5v9l6-4.5z" fill="#7a7a7a"/>
<path d="M791 756L804 781.5L881 781.5L894 756" fill="#e6e6e6" stroke="#9c9c9c" stroke-width="1"/>
<text x="810.70" y="773.50" font-size="16.5" fill="#444" textLength="64.61" lengthAdjust="spacing" xml:space="preserve">Kaufteile</text>
<path d="M666 756L679 781.5L791 781.5L804 756" fill="#e6e6e6" stroke="#9c9c9c" stroke-width="1"/>
<text x="686.60" y="773.50" font-size="16.5" fill="#444" textLength="96.70" lengthAdjust="spacing" xml:space="preserve">Ersatzteilliste</text>
<path d="M546.6 756L559.6 781.5L665 781.5L678 756" fill="#e6e6e6" stroke="#9c9c9c" stroke-width="1"/>
<text x="567.20" y="773.50" font-size="16.5" fill="#444" textLength="89.11" lengthAdjust="spacing" xml:space="preserve">Strukturliste</text>
<path d="M450 756L463 781.5L546.6 781.5L559.5 756" fill="#ffffff" stroke="#9c9c9c" stroke-width="1"/>
<rect x="451" y="755" width="108" height="2" fill="#ffffff"/>
<text x="465.40" y="773.50" font-size="16.5" fill="#222" font-weight="bold" textLength="77.65" lengthAdjust="spacing" xml:space="preserve">Stückliste</text>
<text x="1426.80" y="807.50" font-size="16.5" fill="#3c3c3c" textLength="77.55" lengthAdjust="spacing" xml:space="preserve">Positionen</text>
<rect x="1508.5" y="787.5" width="74" height="28" fill="#e8e8e8" stroke="#bdbdbd" stroke-width="1"/>
<text x="1512.40" y="807.50" font-size="16.5" fill="#b4b4b4" xml:space="preserve">17</text>
<rect x="1604" y="804" width="2" height="2" fill="#b8b8b8"/>
<rect x="1600" y="808" width="2" height="2" fill="#b8b8b8"/>
<rect x="1604" y="808" width="2" height="2" fill="#b8b8b8"/>
<rect x="1596" y="812" width="2" height="2" fill="#b8b8b8"/>
<rect x="1600" y="812" width="2" height="2" fill="#b8b8b8"/>
<rect x="1604" y="812" width="2" height="2" fill="#b8b8b8"/>
</svg></body></html>
